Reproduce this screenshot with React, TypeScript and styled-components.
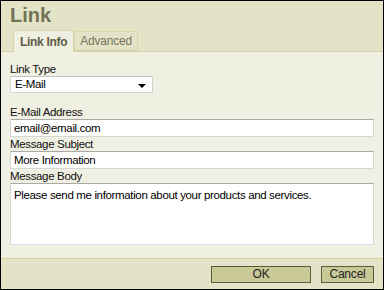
import React from 'react';
import styled, { createGlobalStyle } from 'styled-components';

const GlobalStyle = createGlobalStyle`
  html, body {
    margin: 0;
    padding: 0;
    background: #fff;
  }
  * { box-sizing: border-box; }
`;

const Dialog = styled.div`
  width: 384px;
  height: 290px;
  border: 1px solid #000;
  display: flex;
  flex-direction: column;
  font-family: Tahoma, "Liberation Sans", Arial, sans-serif;
  font-size: 11.5px;
  letter-spacing: -0.35px;
  color: #000;
  background: #f0f0e2;
`;

const Header = styled.div`
  height: 51px;
  background: #e3e3c7;
  border-bottom: 1px solid #d2d2a6;
  display: flex;
  flex-direction: column;
  justify-content: space-between;
  padding-left: 9px;
`;

const Title = styled.div`
  font-size: 20px;
  font-weight: bold;
  color: #727258;
  line-height: 24px;
  padding-top: 2px;
  letter-spacing: 0;
`;

const Tabs = styled.div`
  display: flex;
  align-items: flex-end;
  padding-left: 3px;
  margin-bottom: -1px;
`;

const Tab = styled.div<{ active?: boolean }>`
  height: ${(p) => (p.active ? '22px' : '20px')};
  padding: 0 ${(p) => (p.active ? '6px' : '5px')};
  font-size: 12px;
  line-height: ${(p) => (p.active ? '22px' : '19px')};
  border: 1px solid #d6d6a8;
  border-bottom: ${(p) => (p.active ? 'none' : '1px solid #d2d2a6')};
  background: ${(p) => (p.active ? '#f0f0e2' : '#e3e3c7')};
  color: ${(p) => (p.active ? '#5c5c44' : '#76765c')};
  font-weight: ${(p) => (p.active ? 'bold' : 'normal')};
  margin-bottom: ${(p) => (p.active ? '0' : '1px')};
  letter-spacing: ${(p) => (p.active ? '-0.3px' : '-0.2px')};
`;

const Body = styled.div`
  flex: 1;
  padding: 10px 9px 0 9px;
  display: flex;
  flex-direction: column;
`;

const Label = styled.div<{ gapTop?: number }>`
  line-height: 14px;
  height: 14px;
  margin-top: ${(p) => p.gapTop || 0}px;
  color: #111;
`;

const Select = styled.div`
  width: 143px;
  height: 17px;
  background: #fff;
  border: 1px solid #d4d4d4;
  border-top-color: #c4c4c4;
  padding-left: 4px;
  line-height: 15px;
  display: flex;
  align-items: center;
  justify-content: space-between;
  padding-right: 6px;
`;

const Arrow = styled.span`
  width: 0;
  height: 0;
  border-left: 4px solid transparent;
  border-right: 4px solid transparent;
  border-top: 4px solid #000;
  margin-top: 2px;
`;

const Input = styled.div`
  height: 18px;
  background: #fff;
  border: 1px solid #d6d6d6;
  border-top-color: #a9a9a9;
  padding-left: 3px;
  line-height: 16px;
`;

const TextArea = styled.div`
  height: 62px;
  background: #fff;
  border: 1px solid #d6d6d6;
  border-top-color: #a9a9a9;
  border-bottom-color: #dcdce6;
  padding: 4px 3px;
  line-height: 14px;
`;

const Footer = styled.div`
  height: 31px;
  background: #e3e3c7;
  border-top: 1px solid #d3d3a3;
  display: flex;
  justify-content: flex-end;
  align-items: flex-start;
  gap: 10px;
  padding: 7px 9px 0 0;
`;

const Button = styled.div<{ w: number }>`
  width: ${(p) => p.w}px;
  height: 17px;
  background: #c9c997;
  border: 1px solid #5c5c3c;
  text-align: center;
  line-height: 15px;
  font-size: 12px;
  letter-spacing: -0.2px;
  color: #222;
`;

export default function App() {
  return (
    <>
      <GlobalStyle />
      <Dialog>
        <Header>
          <Title>Link</Title>
          <Tabs>
            <Tab active>Link Info</Tab>
            <Tab>Advanced</Tab>
          </Tabs>
        </Header>
        <Body>
          <Label>Link Type</Label>
          <Select>
            <span>E-Mail</span>
            <Arrow />
          </Select>
          <Label gapTop={12}>E-Mail Address</Label>
          <Input>email@email.com</Input>
          <Label>Message Subject</Label>
          <Input>More Information</Input>
          <Label>Message Body</Label>
          <TextArea>Please send me information about your products and services.</TextArea>
        </Body>
        <Footer>
          <Button w={100}>OK</Button>
          <Button w={53}>Cancel</Button>
        </Footer>
      </Dialog>
    </>
  );
}
